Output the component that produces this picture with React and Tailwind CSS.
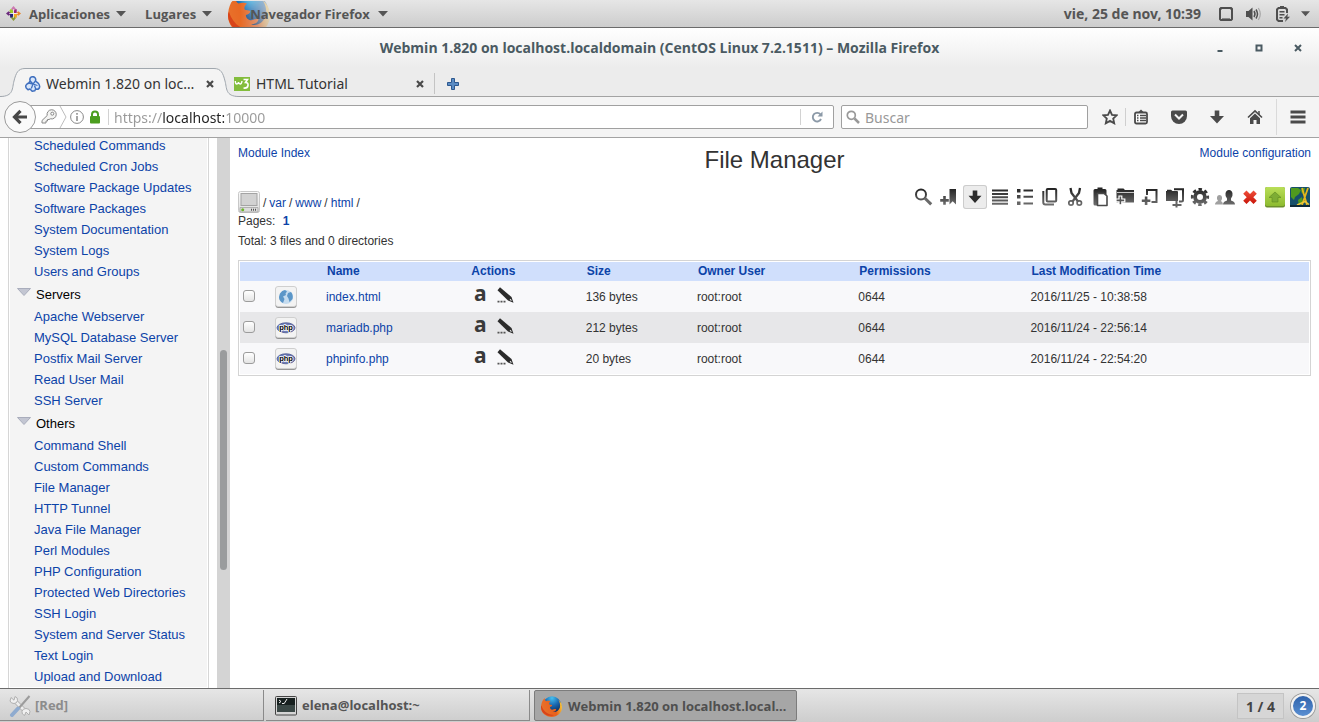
import React from "react";

const INK = "url(#ink)";

const GROUPS = [
  {
    items: [
      "Scheduled Commands",
      "Scheduled Cron Jobs",
      "Software Package Updates",
      "Software Packages",
      "System Documentation",
      "System Logs",
      "Users and Groups",
    ],
  },
  {
    title: "Servers",
    items: [
      "Apache Webserver",
      "MySQL Database Server",
      "Postfix Mail Server",
      "Read User Mail",
      "SSH Server",
    ],
  },
  {
    title: "Others",
    items: [
      "Command Shell",
      "Custom Commands",
      "File Manager",
      "HTTP Tunnel",
      "Java File Manager",
      "Perl Modules",
      "PHP Configuration",
      "Protected Web Directories",
      "SSH Login",
      "System and Server Status",
      "Text Login",
      "Upload and Download",
    ],
  },
];

const FILES = [
  { name: "index.html", kind: "html", size: "136 bytes", owner: "root:root", mode: "0644", time: "2016/11/25 - 10:38:58" },
  { name: "mariadb.php", kind: "php", size: "212 bytes", owner: "root:root", mode: "0644", time: "2016/11/24 - 22:56:14" },
  { name: "phpinfo.php", kind: "php", size: "20 bytes", owner: "root:root", mode: "0644", time: "2016/11/24 - 22:54:20" },
];

function Defs() {
  return (
    <svg className="absolute size-0" aria-hidden="true">
      <defs>
        <linearGradient id="ink" gradientUnits="userSpaceOnUse" x1="0" y1="2" x2="0" y2="22">
          <stop offset="0" stopColor="#1c1c1c" />
          <stop offset="1" stopColor="#777" />
        </linearGradient>
        <linearGradient id="red" x1="0" y1="0" x2="0" y2="1">
          <stop offset="0" stopColor="#f0503c" />
          <stop offset="1" stopColor="#c81408" />
        </linearGradient>
        <linearGradient id="green" x1="0" y1="0" x2="0" y2="1">
          <stop offset="0" stopColor="#b9de58" />
          <stop offset="1" stopColor="#8dbb30" />
        </linearGradient>
        <linearGradient id="tile" x1="0" y1="0" x2="0" y2="1">
          <stop offset="0" stopColor="#fafafa" />
          <stop offset="1" stopColor="#dedede" />
        </linearGradient>
        <radialGradient id="globe" cx="0.5" cy="0.1" r="0.8">
          <stop offset="0" stopColor="#45c0f0" />
          <stop offset="0.5" stopColor="#1a68b0" />
          <stop offset="1" stopColor="#0b2a5c" />
        </radialGradient>
        <linearGradient id="fox" x1="0" y1="0.3" x2="1" y2="0.1">
          <stop offset="0" stopColor="#e8702a" />
          <stop offset="0.6" stopColor="#e8601c" />
          <stop offset="1" stopColor="#fbd83a" />
        </linearGradient>
        <linearGradient id="fadeStops" x1="0" y1="0" x2="1" y2="0">
          <stop offset="0.3" stopColor="#fff" />
          <stop offset="1" stopColor="#333" />
        </linearGradient>
        <mask id="fade" maskUnits="userSpaceOnUse" x="0" y="0" width="40" height="40">
          <rect width="40" height="40" fill="url(#fadeStops)" />
        </mask>
      </defs>
    </svg>
  );
}

function Firefox({ className, faded }) {
  return (
    <svg viewBox="0 0 40 40" className={className} aria-hidden="true">
      <g mask={faded ? "url(#fade)" : undefined}>
        <circle cx="21" cy="18" r="17.500" fill="url(#globe)" />
        <path
          d="M3 9c2-2 3-4 4-5 0 3 1 5 3 6 3-1 6-1 8 0-2 2-3 4-2 6l5 1c1 2-2 3-4 4 0 2 1 4 4 5 3 0 5-2 8-1 0 3-4 5-7 5 6 2 12-2 14-8 1-5 0-11-3-15 5 4 7 9 7 15 0 10-9 18-20 18S0 32 0 22c0-5 1-9 3-13z"
          fill="url(#fox)"
        />
        <path d="M1 18c3 10 11 18 24 18-10 5-24-1-25-14 0-2 0-3 1-4z" fill="#d8441a" />
      </g>
    </svg>
  );
}

function Caret() {
  return (
    <svg viewBox="0 0 10 6" className="h-[6px] w-[10px]" aria-hidden="true">
      <path d="M0 0h10L5 5.500z" fill="#555" />
    </svg>
  );
}

function TopBar() {
  return (
    <header className="flex h-7 shrink-0 items-center border-b border-[#6b6b6b] bg-linear-to-b from-[#e6e6e6] to-[#cdcdcd] text-[13px] leading-5 font-bold text-[#555]">
      <button className="flex items-center gap-[6px] pl-[6px]">
        <svg viewBox="0 0 14 14" className="size-[15px]" aria-hidden="true">
          <path d="M4 3h3v3.500H3.500V4z" fill="#9ccd2a" />
          <path d="M7 3l3 0 0 3.500H7z" fill="#932279" />
          <path d="M3.500 7H7v4H4z" fill="#262577" />
          <path d="M7 7h3.500l-.5 4H7z" fill="#efa724" />
          <path d="M7 0l2.200 2.500L7 5 4.800 2.500z" fill="#cc7ab0" />
          <path d="M7 9l2.200 2.500L7 14l-2.200-2.500z" fill="#8b9a35" />
          <path d="M0 7l2.500-2L5 7 2.500 9z" fill="#6b2a7c" />
          <path d="M14 7l-2.500-2L9 7l2.500 2z" fill="#e8862d" />
          <path d="M7 3v8M3 7h8" stroke="#fff" strokeWidth=".7" />
        </svg>
        <span className="flex items-center gap-[6px] pl-[2px]">Aplicaciones <Caret /></span>
      </button>
      <button className="ml-[19px] flex items-center gap-[6px]">Lugares <Caret /></button>
      <button className="ml-4 flex h-[26px] items-center overflow-hidden">
        <Firefox className="-mr-[20px] size-[42px] shrink-0 self-center" faded />
        <span className="relative flex items-center gap-2">Navegador Firefox <Caret /></span>
      </button>
      <div className="ml-auto flex items-center pr-[9px]">
        <time className="mr-[18px] font-['Noto_Sans',sans-serif] text-[14px]">vie, 25 de nov, 10:39</time>
        <svg viewBox="0 0 14 14" className="mr-[13px] size-[14px]" aria-hidden="true">
          <path d="M1.500 0h11L14 1.500v11L12.500 14h-11L0 12.500v-11zM2 3v9h10V3l-1-1H3z" fill="#4f4f4f" fillRule="evenodd" />
          <path d="M3 11h8v1H3z" fill="#888" />
        </svg>
        <svg viewBox="0 0 16 14" className="mr-[14px] h-[14px] w-4" aria-hidden="true">
          <path d="M0 4h2.500L6.500 0.500v13L2.500 10H0z" fill="#4f4f4f" />
          <path d="M8 4q2 3 0 6M10 2.500q3 4.500 0 9" fill="none" stroke="#4f4f4f" strokeWidth="1.500" />
          <path d="M12.300 1q4 6 0 12" fill="none" stroke="#aaa" strokeWidth="1.300" />
        </svg>
        <svg viewBox="0 0 14 16" className="mr-[11px] h-4 w-[14px]" aria-hidden="true">
          <path d="M11 7V3.500L9.500 2h-7L1 3.500v10L2.500 15H7" fill="none" stroke="#4f4f4f" strokeWidth="2" />
          <path d="M4 0h4v2H4zM3.500 5h5v1.500h-5zM3.500 8h5v1.500h-5zM3.500 11h3v1.500h-3z" fill="#4f4f4f" />
          <path d="M12 7.500l-4.500 5H10l-1 3.500 5-5.200h-2.600z" fill="#4f4f4f" />
        </svg>
        <svg viewBox="0 0 10 6" className="h-[6px] w-[9px]" aria-hidden="true">
          <path d="M0 0h10L5 5.500z" fill="#555" />
        </svg>
      </div>
    </header>
  );
}

function TitleBar() {
  return (
    <div className="grid h-10 shrink-0 grid-cols-[1fr_auto_1fr] items-center bg-linear-to-b from-white to-[#ececec] text-[#4a5a62]">
      <span />
      <h1 className="text-[14px] leading-5 font-bold">
        Webmin 1.820 on localhost.localdomain (CentOS Linux 7.2.1511) – Mozilla Firefox
      </h1>
      <div className="flex justify-end gap-[31px] pr-[17px]">
        <button aria-label="Minimizar">
          <svg viewBox="0 0 8 8" className="size-2"><path d="M1.500 6h5v2h-5z" fill="#4a5a62" /></svg>
        </button>
        <button aria-label="Maximizar">
          <svg viewBox="0 0 8 8" className="size-2"><path d="M1.500 1.500h5v5h-5z" fill="none" stroke="#4a5a62" strokeWidth="2" /></svg>
        </button>
        <button aria-label="Cerrar">
          <svg viewBox="0 0 8 8" className="size-2"><path d="M1 1l6 6M7 1L1 7" stroke="#4a5a62" strokeWidth="2" /></svg>
        </button>
      </div>
    </div>
  );
}

function CloseX({ label }) {
  return (
    <button aria-label={label} className="shrink-0">
      <svg viewBox="0 0 8 8" className="size-2">
        <path d="M1 1l6 6M7 1L1 7" stroke="#4a4a4a" strokeWidth="2.200" />
      </svg>
    </button>
  );
}

function TabStrip() {
  return (
    <div className="flex h-[29px] shrink-0 items-end bg-[#ececec] font-['Noto_Sans',sans-serif] text-[14px] leading-5 text-[#333] shadow-[inset_0_-1px_0_#a3a3a3]">
      <div className="flex h-[29px]">
        <svg viewBox="0 0 25 29" className="h-[29px] w-[25px]" aria-hidden="true">
          <path d="M0 28.500C14 28.500 12 20 14 13 16 5 18 .5 25 .5V29H0z" fill="#f4f4f4" />
          <path d="M0 28.500C14 28.500 12 20 14 13 16 5 18 .5 25 .5" fill="none" stroke="#a0a7ae" />
        </svg>
        <div className="flex w-[189px] items-center border-t border-[#a0a7ae] bg-[#f4f4f4] pt-[2px]">
          <svg viewBox="0 0 16 16" className="size-4 shrink-0" aria-hidden="true">
            <g stroke="#3f6fbe" strokeLinejoin="round">
              <path
                d="M5.200 5Q4.200 2.500 6 1.200 8 0 9.800 1.500 11.200 3 10.500 5l2.300 1.800Q15 9 14.600 11q-.4 2.300-2.600 2.200l-1.300-.2-1 1.800-2.500.4L5 13l-2 .8L1.200 12Q0 9.500 2 8l1.800-1z"
                fill="#d8e6fa"
                strokeWidth="1.500"
              />
              <path d="M5.200 5L8 8l2.500-3M3.800 7L8 8l-1.700 4.500M8 8l4.500 1.500M10.700 13L9.500 9.500" fill="none" strokeWidth="1.300" />
            </g>
          </svg>
          <span className="ml-[5px] grow whitespace-nowrap">Webmin 1.820 on loc…</span>
          <CloseX label="Cerrar Webmin" />
        </div>
        <svg viewBox="0 0 25 29" className="h-[29px] w-[25px]" aria-hidden="true">
          <path d="M25 28.500C11 28.500 13 20 11 13 9 5 7 .5 0 .5V29H25z" fill="#f4f4f4" />
          <path d="M25 28.500C11 28.500 13 20 11 13 9 5 7 .5 0 .5" fill="none" stroke="#a0a7ae" />
        </svg>
      </div>
      <div className="-ml-[5px] flex h-[29px] w-[200px] items-center pt-[3px] pr-[10px]">
        <svg viewBox="0 0 16 14" className="h-[14px] w-4 shrink-0" aria-hidden="true">
          <path d="M0 0h16v14H0z" fill="#83bd3c" />
          <path d="M1.300 4q0 3 1.500 3t1.700-2q.3 2 1.700 2T8 4" fill="none" stroke="#fff" strokeWidth="1.400" />
          <path d="M9.500 2.500h4l-2 3q3 0 2.500 3t-4.500 2.500" fill="none" stroke="#fff" strokeWidth="1.600" />
        </svg>
        <span className="ml-[6px] grow">HTML Tutorial</span>
        <CloseX label="Cerrar HTML Tutorial" />
      </div>
      <div className="flex h-[29px] items-center pt-[2px]">
        <div className="h-[21px] border-l border-[#c4c4c4]" />
        <button aria-label="Nueva pestaña" className="ml-3">
          <svg viewBox="0 0 12 12" className="size-3">
            <path d="M4.500.5h3v4h4v3h-4v4h-3v-4h-4v-3h4z" fill="#5b8cc4" stroke="#2d588f" />
          </svg>
        </button>
      </div>
    </div>
  );
}

function NavBar() {
  return (
    <div className="flex h-[41px] shrink-0 items-center border-b border-[#a3a3a3] bg-[#f4f4f4] pl-1 font-['Noto_Sans',sans-serif] text-[14px] leading-5">
      <button aria-label="Atrás" className="relative z-10 grid size-8 shrink-0 place-items-center rounded-full border border-[#9a9a9a] bg-[#fafafa]">
        <svg viewBox="0 0 16 16" className="size-4">
          <path d="M8.500 1.800L2.500 8l6 6.200M3 8h12" fill="none" stroke="#474747" strokeWidth="3.200" />
        </svg>
      </button>
      <div className="-ml-3 flex h-6 grow items-center rounded-[2px] border border-[#a0a0a0] bg-white pl-4">
        <svg viewBox="0 0 16 16" className="size-4 shrink-0" aria-hidden="true">
          <path d="M6.200 6.500A4.600 4.600 0 1 1 9.500 9.800L8 10.500H6.500V12H5v2H1v-2.500z" fill="#f4f4f2" stroke="#888" />
          <circle cx="11.300" cy="4.700" r="1.500" fill="#fff" stroke="#888" />
        </svg>
        <svg viewBox="0 0 8 22" className="ml-[2px] h-[22px] w-2 shrink-0" aria-hidden="true">
          <path d="M1 0l6 11-6 11" fill="none" stroke="#bdbdbd" />
        </svg>
        <svg viewBox="0 0 14 14" className="ml-[3px] size-[14px] shrink-0" aria-hidden="true">
          <circle cx="7" cy="7" r="6.400" fill="none" stroke="#888" />
          <path d="M7 3v1.700M7 6v5" stroke="#888" strokeWidth="1.500" />
        </svg>
        <svg viewBox="0 0 12 14" className="ml-[5px] h-[14px] w-3 shrink-0" aria-hidden="true">
          <path d="M3 7V4.500a3 3 0 0 1 6 0V7" fill="none" stroke="#4b9e1e" strokeWidth="2" />
          <rect x="1" y="6" width="10" height="7.500" rx="1" fill="#4b9e1e" />
        </svg>
        <div className="ml-[7px] h-4 border-l border-[#d2d2d2]" />
        <input
          aria-label="Dirección"
          defaultValue="https://localhost:10000"
          className="ml-[5px] min-w-0 grow bg-[linear-gradient(to_right,#999_49px,#222_49px,#222_110px,#999_110px)] bg-clip-text pt-px text-transparent caret-[#222] outline-none"
        />
        <div className="h-4 border-l border-[#d2d2d2]" />
        <button aria-label="Recargar" className="mx-[10px]">
          <svg viewBox="0 0 12 12" className="size-3">
            <path d="M9.500 3.500A4.300 4.300 0 1 0 10 8" fill="none" stroke="#8c9aa8" strokeWidth="1.900" />
            <path d="M11.500.5v5h-5z" fill="#8c9aa8" />
          </svg>
        </button>
      </div>
      <div className="ml-[7px] flex h-6 w-[247px] shrink-0 items-center rounded-[2px] border border-[#a0a0a0] bg-white pl-1">
        <svg viewBox="0 0 14 14" className="size-[14px] shrink-0" aria-hidden="true">
          <circle cx="5.300" cy="5.300" r="4" fill="none" stroke="#999" strokeWidth="1.700" />
          <path d="M8.500 8.500L13 13" stroke="#999" strokeWidth="2.500" />
        </svg>
        <input aria-label="Buscar" placeholder="Buscar" className="ml-[5px] min-w-0 grow pt-px outline-none placeholder:text-[#999]" />
      </div>
      <div className="flex shrink-0 items-center self-stretch pl-[14px] text-[#4a4a4a]">
        <button aria-label="Marcador">
          <svg viewBox="0 0 16 16" className="size-4">
            <path d="M8 1.500l2 4.300 4.700.5-3.500 3.200 1 4.800L8 11.900l-4.200 2.400 1-4.800L1.300 6.300 6 5.800z" fill="none" stroke="currentColor" strokeWidth="1.800" />
          </svg>
        </button>
        <div className="ml-[7px] h-[18px] border-l border-[#cfcfcf]" />
        <button aria-label="Lista" className="ml-[7px]">
          <svg viewBox="0 0 16 16" className="size-4">
            <path d="M2 5q0-1.500 1.500-1.500h9Q14 3.500 14 5v8q0 1.500-1.500 1.500h-9Q2 14.500 2 13z" fill="#fff" stroke="currentColor" strokeWidth="1.800" />
            <path d="M5 3.500L8 .5l3 3z" fill="currentColor" />
            <path d="M4 6.500h1.500M7 6.500h6M4 9h1.500M7 9h6M4 11.500h1.500M7 11.500h6" stroke="currentColor" strokeWidth="1.400" />
          </svg>
        </button>
        <button aria-label="Pocket" className="ml-[22px]">
          <svg viewBox="0 0 16 16" className="size-4">
            <path d="M1.500 1.500h13q1.500 0 1.500 1.500v4a8 8 0 0 1-16 0V3q0-1.500 1.500-1.500z" fill="currentColor" />
            <path d="M4 5.500l4 4 4-4" fill="none" stroke="#f4f4f4" strokeWidth="2" />
          </svg>
        </button>
        <button aria-label="Descargas" className="ml-[22px]">
          <svg viewBox="0 0 16 16" className="size-4">
            <path d="M5.700 1.500h4.600V7H15l-7 7.500L1 7h4.700z" fill="currentColor" />
          </svg>
        </button>
        <button aria-label="Inicio" className="ml-[22px]">
          <svg viewBox="0 0 16 16" className="size-4">
            <path d="M1 8.500l7-6.700 7 6.700" fill="none" stroke="currentColor" strokeWidth="1.600" />
            <path d="M8 4.500l5 4.800V15H9.500v-4h-3v4H3V9.300z" fill="currentColor" />
            <path d="M12 2v4" stroke="currentColor" strokeWidth="1.500" />
          </svg>
        </button>
        <div className="ml-[13px] h-9 border-l border-[#dadada]" />
        <button aria-label="Menú" className="mx-[13px]">
          <svg viewBox="0 0 16 16" className="size-4">
            <path d="M.5 3h15M.5 8h15M.5 13h15" stroke="currentColor" strokeWidth="2.800" />
          </svg>
        </button>
      </div>
    </div>
  );
}

function Sidebar() {
  return (
    <div className="flex h-full w-[230px] shrink-0 overflow-hidden">
      <nav className="ml-2 h-full grow overflow-hidden border-x border-[#d6d6d6] px-px">
        <div className="-mt-[3px] bg-[#f4f4f4] text-[13px] leading-[21px] text-[#0c43a8]">
          {GROUPS.map((group) => (
            <section key={group.items[0]}>
              {group.title && (
                <button className="flex h-6 items-center gap-[5px] pl-[7px] text-black">
                  <svg viewBox="0 0 14 8" className="mb-1 h-2 w-[14px]" aria-hidden="true">
                    <path d="M.5.5h13L7 7.500z" fill="#c3c6d2" stroke="#a9adbc" />
                  </svg>
                  {group.title}
                </button>
              )}
              <ul>
                {group.items.map((item) => (
                  <li key={item} className="pl-6">
                    <a href="#">{item}</a>
                  </li>
                ))}
              </ul>
            </section>
          ))}
        </div>
      </nav>
      <div className="ml-2 flex w-[13px] flex-col items-center bg-[#d4d4d4]">
        <div className="h-[212px]" />
        <div className="h-[220px] w-[7px] rounded-[4px] bg-[#9a9c9d]" />
      </div>
    </div>
  );
}

const TOOLS = [
  ["Search", (
    <g fill="none">
      <circle cx="8" cy="9.500" r="5" stroke={INK} strokeWidth="2" />
      <path d="M11.700 13l6.500 6.300" stroke="#6a6a6a" strokeWidth="3" />
    </g>
  )],
  ["Bookmark", (
    <g fill={INK}>
      <path d="M11.500 4H18v15.500l-3.300-3.300-3.200 3.300z" />
      <path d="M5.200 11h2.600v3h3v2.700h-3v3H5.200v-3h-3V14h3z" />
    </g>
  )],
  ["Download", <path d="M9.700 5.500h4.600v5.300h4.200L12 18l-6.500-7.200h4.200z" fill="#2b2b2b" />, true],
  ["Select all", <path d="M4 4.500h16v2H4zM4 8h16v2H4zM4 11.200h16v2H4zM4 14.500h16v2H4zM4 17.700h16v2H4z" fill={INK} />],
  ["Invert", <path d="M4 4h3.500v3.500H4zM4 10h3.500v3.500H4zM4 16.500h3.500V20H4zM10.500 4.500H20v2h-9.500zM10.500 10.700H20v2h-9.500zM10.500 17.500H20v2h-9.500z" fill={INK} />],
  ["Copy", (
    <g fill="none" stroke={INK} strokeWidth="2">
      <rect x="8.700" y="4" width="9.500" height="12.500" rx="1" />
      <path d="M5.300 6v11.500q0 2 2 2H16" />
    </g>
  )],
  ["Cut", (
    <g fill="none" stroke={INK}>
      <path d="M7.500 3l1 5 6.500 8.500M17 3l-1 5-6.500 8.500" strokeWidth="2.300" />
      <circle cx="8" cy="18" r="2.200" strokeWidth="1.700" />
      <circle cx="16.300" cy="18" r="2.200" strokeWidth="1.700" />
    </g>
  )],
  ["Paste", (
    <g>
      <path d="M7 4h2.500V2.500h5V4H17q1.500 0 1.500 1.500V19q0 1.500-1.500 1.500H7q-1.500 0-1.500-1.500V5.500Q5.500 4 7 4z" fill={INK} />
      <path d="M9.500 8.500h6.500l3 2.500v9.500H9.500z" fill="#fff" stroke="#4a4a4a" strokeWidth="1.600" strokeLinejoin="round" />
    </g>
  )],
  ["New folder", (
    <g>
      <path d="M3.500 5h1V3.500h6L12 5h9v12.500H3.500z" fill={INK} />
      <path d="M4 7.500h17" stroke="#eee" strokeWidth=".8" />
      <path d="M6 11h2.800v3h3v2.800h-3v3H6v-3H3V14h3z" fill="#555" stroke="#fff" strokeWidth="1.200" />
    </g>
  )],
  ["New file", (
    <g>
      <path d="M9 10V5h9.500v12h-5" fill="none" stroke={INK} strokeWidth="2" />
      <path d="M6.800 11.500h2.600v3h3v2.600h-3v3H6.800v-3h-3v-2.600h3z" fill={INK} />
    </g>
  )],
  ["Mount", (
    <g>
      <path d="M11 4.300h9V15q0 1.500-1.500 1.500H16" fill="none" stroke={INK} strokeWidth="2" />
      <path d="M3 6h1V4.700h4L9.500 6H14q1 0 1 1v9H3z" fill={INK} />
      <path d="M13.500 16v3M9.500 20h9M13.500 18v4.500" stroke="#666" strokeWidth="2" />
    </g>
  )],
  ["Properties", (
    <g>
      <circle cx="12" cy="12" r="7.700" fill="none" stroke={INK} strokeWidth="2.800" strokeDasharray="3.400 2.648" strokeDashoffset="1.700" />
      <circle cx="12" cy="12" r="4.900" fill="none" stroke={INK} strokeWidth="3.800" />
    </g>
  )],
  ["Owner", (
    <g>
      <path d="M10 19.500q0-3 4-4v-2q-2-2-1.500-5Q13 5 16 5t3.500 3.500q.5 3-1.500 5v2q4 1 4 4z" fill={INK} />
      <path d="M2 19.500q0-2.500 3-3.500-1.500-1.500-1-4 .5-2 2.500-2T9 12q.5 2.500-1 4 2 1 2 3.500z" fill="#a0a0a0" />
    </g>
  )],
  ["Delete", <path d="M8.500 5.500L12 9l3.500-3.500 3.300 3.300-3.500 3.500 3.500 3.500-3.300 3.300L12 15.600l-3.500 3.500-3.300-3.300 3.500-3.500-3.500-3.500z" fill="url(#red)" />],
  ["Upload", (
    <g>
      <rect x="2" y="2" width="20" height="20.500" rx="2" fill="#6c8f2c" />
      <rect x="2" y="2" width="20" height="19" rx="2" fill="url(#green)" />
      <path d="M12 7l6 5.500h-3V17H9v-4.500H6z" fill="#7dac34" stroke="#5e8920" strokeWidth=".6" />
    </g>
  )],
  ["Extract", (
    <g>
      <rect x="2" y="2" width="20" height="20" rx="2" fill="#17506a" />
      <path d="M3 3h7l3 2-2 4-4 3-1 3-3-3zM14 3h3l-1 7-3-3zM10 15l4-3 1 5-4 4z" fill="#4f9a1e" />
      <path d="M14 3l5 17M20 3l-6 17" stroke="#e3b51c" strokeWidth="1.800" />
      <path d="M9 20l8-3.500 4 3" fill="none" stroke="#f0c93a" strokeWidth="1.400" />
      <path d="M2 20h20v2H2z" fill="#0e2a38" />
    </g>
  )],
];

function FileIcon({ kind }) {
  return (
    <svg viewBox="0 0 22 22" className="mt-px block size-[22px]" aria-hidden="true">
      <rect x=".5" y="1" width="21" height="20.700" rx="2.500" fill="#777" />
      <rect x=".5" y=".5" width="21" height="20" rx="2.500" fill="#f3f3f3" stroke="#cfcfcf" />
      {kind === "html" ? (
        <g>
          <circle cx="11" cy="11" r="7" fill="#c4dbef" />
          <path d="M5 7.500q2-3.300 5-3.500l2 1.500-1.500 2L11 9l-3 1.500L9.500 13 8 17q-4-2-4-6zM13 7l3-1q2.500 3 1.500 7l-3 3-1-3.500L12 10z" fill="#5b96c8" />
        </g>
      ) : (
        <g>
          <ellipse cx="11" cy="10.800" rx="9" ry="5" fill="#6e7db8" stroke="#4a568e" strokeWidth=".8" />
          <text x="11" y="13" textAnchor="middle" fontFamily="Liberation Sans, sans-serif" fontSize="7.500" fontWeight="bold" fill="#000" stroke="#fff" strokeWidth="1.400" paintOrder="stroke">
            php
          </text>
        </g>
      )}
    </svg>
  );
}

function FileTable() {
  return (
    <div className="mt-[9px] border border-[#d4d4d4] p-px">
      <table className="w-full table-fixed border-collapse text-left text-[12px]">
        <colgroup>
          <col className="w-8" />
          <col className="w-[54px]" />
          <col className="w-[13.5%]" />
          <col className="w-[10.8%]" />
          <col className="w-[10.4%]" />
          <col className="w-[15.1%]" />
          <col className="w-[16.1%]" />
          <col />
        </colgroup>
        <thead>
          <tr className="h-[19px] bg-[#d0dffc] leading-[19px] text-[#0c43a8]">
            <td />
            <td />
            {["Name", "Actions", "Size", "Owner User", "Permissions", "Last Modification Time"].map((h) => (
              <th key={h} className="p-0 pl-px font-bold">{h}</th>
            ))}
          </tr>
        </thead>
        <tbody className="text-[#333]">
          {FILES.map((f) => (
            <tr key={f.name} className="h-[31px] bg-[#f8f8fa] even:bg-[#e7e7e9]">
              <td className="p-0 pl-[3px]">
                <input
                  type="checkbox"
                  aria-label={f.name}
                  className="mb-[2px] block size-3 appearance-none rounded-[3px] border border-[#9c9c9c] bg-linear-to-b from-white to-[#e4e4e4] checked:bg-[#10409f]"
                />
              </td>
              <td className="p-0 pl-[3px]"><FileIcon kind={f.kind} /></td>
              <td className="p-0"><a href="#" className="text-[#0c43a8]">{f.name}</a></td>
              <td className="p-0">
                <div className="mb-1 flex items-center gap-[10px] pl-[3px]">
                  <button
                    aria-label={"Rename " + f.name}
                    className="-mt-[5px] -mb-[2px] w-[14px] text-center font-['Noto_Sans',sans-serif] text-[21px] leading-7 font-bold text-[#3a3a3a]"
                  >
                    a
                  </button>
                  <button aria-label={"Edit " + f.name}>
                    <svg viewBox="0 0 17 16" className="block h-4 w-[17px]">
                      <path d="M3 .3L14.500 10l2 5.700-5.500-2.200L.5 3.200z" fill="#2b2b2b" />
                      <path d="M13.700 11.700l1.200 2.300-2.400-1.100z" fill="#f0f0f0" />
                      <path d="M.5 14.700h2M3.500 14.700h2M6.500 14.700h2" stroke="#555" strokeWidth="1.700" />
                    </svg>
                  </button>
                </div>
              </td>
              <td className="p-0">{f.size}</td>
              <td className="p-0">{f.owner}</td>
              <td className="p-0">{f.mode}</td>
              <td className="p-0">{f.time}</td>
            </tr>
          ))}
        </tbody>
      </table>
    </div>
  );
}

function Main() {
  return (
    <main className="min-w-0 grow overflow-hidden bg-white px-2 text-[12px] leading-5 text-[#333]">
      <div className="grid grid-cols-[1fr_auto_1fr] items-start pt-[5px]">
        <a href="#" className="text-[#0c43a8]">Module Index</a>
        <h2 className="pt-[2px] text-[24px] leading-[30px] text-[#333]">File Manager</h2>
        <a href="#" className="justify-self-end text-[#0c43a8]">Module configuration</a>
      </div>
      <div className="mt-[10px] flex items-start justify-between">
        <div>
          <div className="flex items-end pt-[6px]">
            <svg viewBox="0 0 22 22" className="size-[22px]" aria-hidden="true">
              <rect x=".5" y=".5" width="21" height="21" rx="2" fill="url(#tile)" stroke="#c8c8c8" />
              <rect x="3" y="2.500" width="16" height="12" fill="#d2d2d2" stroke="#a4a4a4" />
              <path d="M2 16.500h18v4.500H2z" fill="#dcdcdc" stroke="#a4a4a4" strokeWidth=".8" />
              <circle cx="4.700" cy="18.700" r="1.500" fill="#6db52d" />
              <path d="M13 18.700h6" stroke="#555" strokeWidth="2" strokeDasharray="1 1" />
            </svg>
            <div className="flex gap-[3px] pl-[3px]">
              <span>/</span><a href="#" className="text-[#0c43a8]">var</a>
              <span>/</span><a href="#" className="text-[#0c43a8]">www</a>
              <span>/</span><a href="#" className="text-[#0c43a8]">html</a>
              <span>/</span>
            </div>
          </div>
          <div className="-mt-[2px]">Pages: <a href="#" className="ml-1 font-bold text-[#0c43a8]">1</a></div>
          <div>Total: 3 files and 0 directories</div>
        </div>
        <div className="-mr-px flex shrink-0 gap-px">
          {TOOLS.map(([label, art, active]) => (
            <button
              key={label}
              aria-label={label}
              className={active ? "size-6 rounded-[3px] bg-[#ececec] shadow-[inset_0_0_0_1px_#cccccc]" : "size-6"}
            >
              <svg viewBox="0 0 24 24" className="block size-6">{art}</svg>
            </button>
          ))}
        </div>
      </div>
      <FileTable />
    </main>
  );
}

function TaskBar() {
  return (
    <footer className="flex h-[34px] shrink-0 items-stretch border-t border-[#6b6b6b] bg-linear-to-b from-[#e6e6e6] to-[#cdcdcd] pb-px text-[13px] font-bold text-[#555]">
      <button className="mt-px flex w-[264px] items-center gap-1 border-r border-b border-[#8a8a8a] pt-[2px] pl-[9px] text-[#8c8c8c]">
        <svg viewBox="0 0 22 22" className="size-[22px]" aria-hidden="true">
          <path d="M5 5l13 13" stroke="#b5b5b5" strokeWidth="4.500" />
          <path d="M5 5l13 13" stroke="#eee" strokeWidth="2.500" />
          <path d="M2 2.500l3 2.700L6 1.500q3 1 2.500 4T5 8.500 1 6zM20 20l-3-3-1.500 3.500q-3-1-2.500-4t4-3 4 3z" fill="#f0f0f0" stroke="#b0b0b0" />
          <path d="M20.500 1L10 13" stroke="#9c9c9c" strokeWidth="2" />
          <path d="M9 13.500L3 20" stroke="#8fabcf" strokeWidth="4" strokeLinecap="round" />
        </svg>
        [Red]
      </button>
      <button className="mt-px ml-[2px] flex w-[264px] items-center gap-[5px] border-r border-b border-[#8a8a8a] pt-[2px] pl-[9px]">
        <svg viewBox="0 0 22 20" className="h-5 w-[22px]" aria-hidden="true">
          <rect x=".5" y=".5" width="21" height="18.500" rx="1" fill="#d5d5d5" stroke="#444" />
          <rect x="2" y="2" width="18" height="14" fill="#17201f" />
          <path d="M2 9h18v7H2z" fill="#3a4745" />
          <path d="M4 4l2 1.500L4 7M7 7.500h2.500M9.500 7l2.500-4" fill="none" stroke="#eee" />
        </svg>
        elena@localhost:~
      </button>
      <button className="mt-px ml-1 flex w-[263px] items-center gap-[6px] rounded-[2px] border border-[#7c7c7c] bg-[#a6a6a6] pt-[2px] pl-[6px] whitespace-nowrap text-[#4f4f4f]">
        <Firefox className="size-[21px] shrink-0" />
        Webmin 1.820 on localhost.local…
      </button>
      <div className="ml-auto flex items-center pt-[2px] pr-1">
        <div className="mr-[7px] grid h-[26px] w-[47px] place-items-center border border-[#c4c4c4] bg-[#d6d6d6] font-['Noto_Sans',sans-serif] text-[14px] text-[#444]">1 / 4</div>
        <div className="grid size-6 place-items-center rounded-full border-2 border-[#f2f2f2] bg-linear-to-b from-[#2f63ab] to-[#5a8fd2] text-[12px] leading-none text-white shadow-[0_0_0_1px_#999]">2</div>
      </div>
    </footer>
  );
}

export default function App() {
  return (
    <div className="flex h-screen flex-col overflow-hidden bg-white font-['Open_Sans','Noto_Sans',sans-serif]">
      <Defs />
      <TopBar />
      <TitleBar />
      <TabStrip />
      <NavBar />
      <div className="flex min-h-0 grow font-['Liberation_Sans',Arial,sans-serif]">
        <Sidebar />
        <Main />
      </div>
      <TaskBar />
    </div>
  );
}
